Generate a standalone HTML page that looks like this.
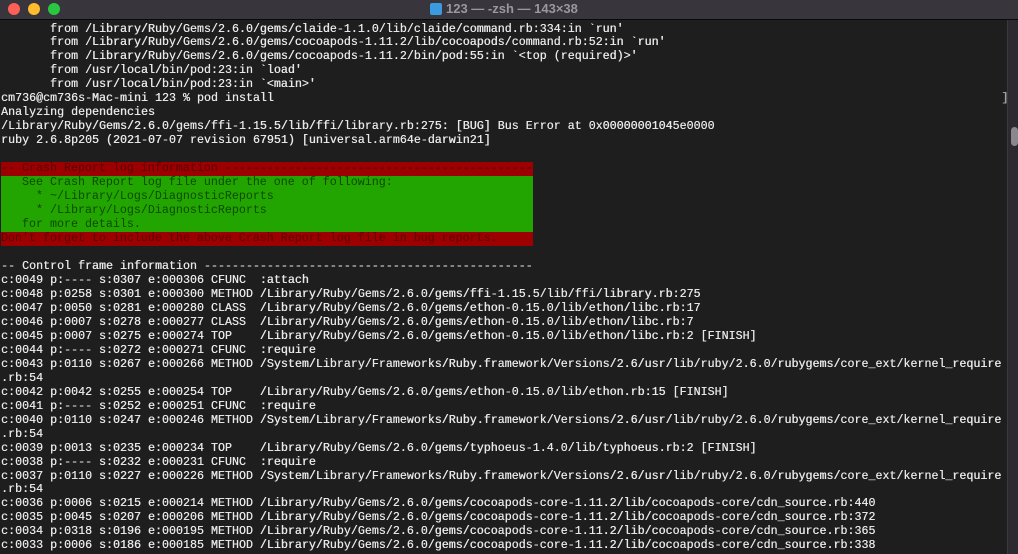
<!DOCTYPE html>
<html><head><meta charset="utf-8"><style>
html,body{margin:0;padding:0;width:1018px;height:554px;overflow:hidden;background:#1e1e1e}
#tb{position:absolute;left:0;top:0;width:1018px;height:19px;background:#38353d;border-bottom:1px solid #0a0a0a}
.d{position:absolute;top:3px;width:12px;height:12px;border-radius:50%}
#title{position:absolute;left:430px;top:1px;font:bold 13px "Liberation Sans",sans-serif;color:#9a979d}
#title span{display:inline-block;width:12px;height:12px;background:#3a9be0;vertical-align:-2px;margin-right:4px;border-radius:2px}
pre{position:absolute;left:1px;top:22.5px;margin:0;font-family:"Liberation Mono",monospace;font-size:11.66px;line-height:13.97px;color:#e8e8e8;white-space:pre;text-shadow:0.3px 0 0 #e8e8e8}
.r{background:#9c0000;color:#5e0000;display:inline-block;width:532px;text-shadow:none}
.g{background:#22a500;color:#0d4a00;display:inline-block;width:532px;text-shadow:none}
#sb{position:absolute;left:1007px;top:20px;width:11px;height:534px;background:#2c2a30;border-left:1px solid #3a383e}
#th{position:absolute;left:1011px;top:127px;width:7px;height:19px;background:#8a888e;border-radius:4px}
</style></head><body>
<div id="tb"><div class="d" style="left:8px;background:#fe5f57"></div><div class="d" style="left:28px;background:#febc2e"></div><div class="d" style="left:48px;background:#28c840"></div>
<div id="title"><span></span>123 — -zsh — 143×38</div></div>
<pre>       from /Library/Ruby/Gems/2.6.0/gems/claide-1.1.0/lib/claide/command.rb:334:in `run'
       from /Library/Ruby/Gems/2.6.0/gems/cocoapods-1.11.2/lib/cocoapods/command.rb:52:in `run'
       from /Library/Ruby/Gems/2.6.0/gems/cocoapods-1.11.2/bin/pod:55:in `&lt;top (required)&gt;'
       from /usr/local/bin/pod:23:in `load'
       from /usr/local/bin/pod:23:in `&lt;main&gt;'
cm736@cm736s-Mac-mini 123 % pod install                                                                                                        <span style="color:#999">]</span>
Analyzing dependencies
/Library/Ruby/Gems/2.6.0/gems/ffi-1.15.5/lib/ffi/library.rb:275: [BUG] Bus Error at 0x00000001045e0000
ruby 2.6.8p205 (2021-07-07 revision 67951) [universal.arm64e-darwin21]

<span class="r">-- Crash Report log information --------------------------------------------</span>
<span class="g">   See Crash Report log file under the one of following:                    </span>
<span class="g">     * ~/Library/Logs/DiagnosticReports                                     </span>
<span class="g">     * /Library/Logs/DiagnosticReports                                      </span>
<span class="g">   for more details.                                                        </span>
<span class="r">Don't forget to include the above Crash Report log file in bug reports.     </span>

-- Control frame information -----------------------------------------------
c:0049 p:---- s:0307 e:000306 CFUNC  :attach
c:0048 p:0258 s:0301 e:000300 METHOD /Library/Ruby/Gems/2.6.0/gems/ffi-1.15.5/lib/ffi/library.rb:275
c:0047 p:0050 s:0281 e:000280 CLASS  /Library/Ruby/Gems/2.6.0/gems/ethon-0.15.0/lib/ethon/libc.rb:17
c:0046 p:0007 s:0278 e:000277 CLASS  /Library/Ruby/Gems/2.6.0/gems/ethon-0.15.0/lib/ethon/libc.rb:7
c:0045 p:0007 s:0275 e:000274 TOP    /Library/Ruby/Gems/2.6.0/gems/ethon-0.15.0/lib/ethon/libc.rb:2 [FINISH]
c:0044 p:---- s:0272 e:000271 CFUNC  :require
c:0043 p:0110 s:0267 e:000266 METHOD /System/Library/Frameworks/Ruby.framework/Versions/2.6/usr/lib/ruby/2.6.0/rubygems/core_ext/kernel_require
.rb:54
c:0042 p:0042 s:0255 e:000254 TOP    /Library/Ruby/Gems/2.6.0/gems/ethon-0.15.0/lib/ethon.rb:15 [FINISH]
c:0041 p:---- s:0252 e:000251 CFUNC  :require
c:0040 p:0110 s:0247 e:000246 METHOD /System/Library/Frameworks/Ruby.framework/Versions/2.6/usr/lib/ruby/2.6.0/rubygems/core_ext/kernel_require
.rb:54
c:0039 p:0013 s:0235 e:000234 TOP    /Library/Ruby/Gems/2.6.0/gems/typhoeus-1.4.0/lib/typhoeus.rb:2 [FINISH]
c:0038 p:---- s:0232 e:000231 CFUNC  :require
c:0037 p:0110 s:0227 e:000226 METHOD /System/Library/Frameworks/Ruby.framework/Versions/2.6/usr/lib/ruby/2.6.0/rubygems/core_ext/kernel_require
.rb:54
c:0036 p:0006 s:0215 e:000214 METHOD /Library/Ruby/Gems/2.6.0/gems/cocoapods-core-1.11.2/lib/cocoapods-core/cdn_source.rb:440
c:0035 p:0045 s:0207 e:000206 METHOD /Library/Ruby/Gems/2.6.0/gems/cocoapods-core-1.11.2/lib/cocoapods-core/cdn_source.rb:372
c:0034 p:0318 s:0196 e:000195 METHOD /Library/Ruby/Gems/2.6.0/gems/cocoapods-core-1.11.2/lib/cocoapods-core/cdn_source.rb:365
c:0033 p:0006 s:0186 e:000185 METHOD /Library/Ruby/Gems/2.6.0/gems/cocoapods-core-1.11.2/lib/cocoapods-core/cdn_source.rb:338</pre>
<div id="sb"></div><div id="th"></div>
</body></html>
